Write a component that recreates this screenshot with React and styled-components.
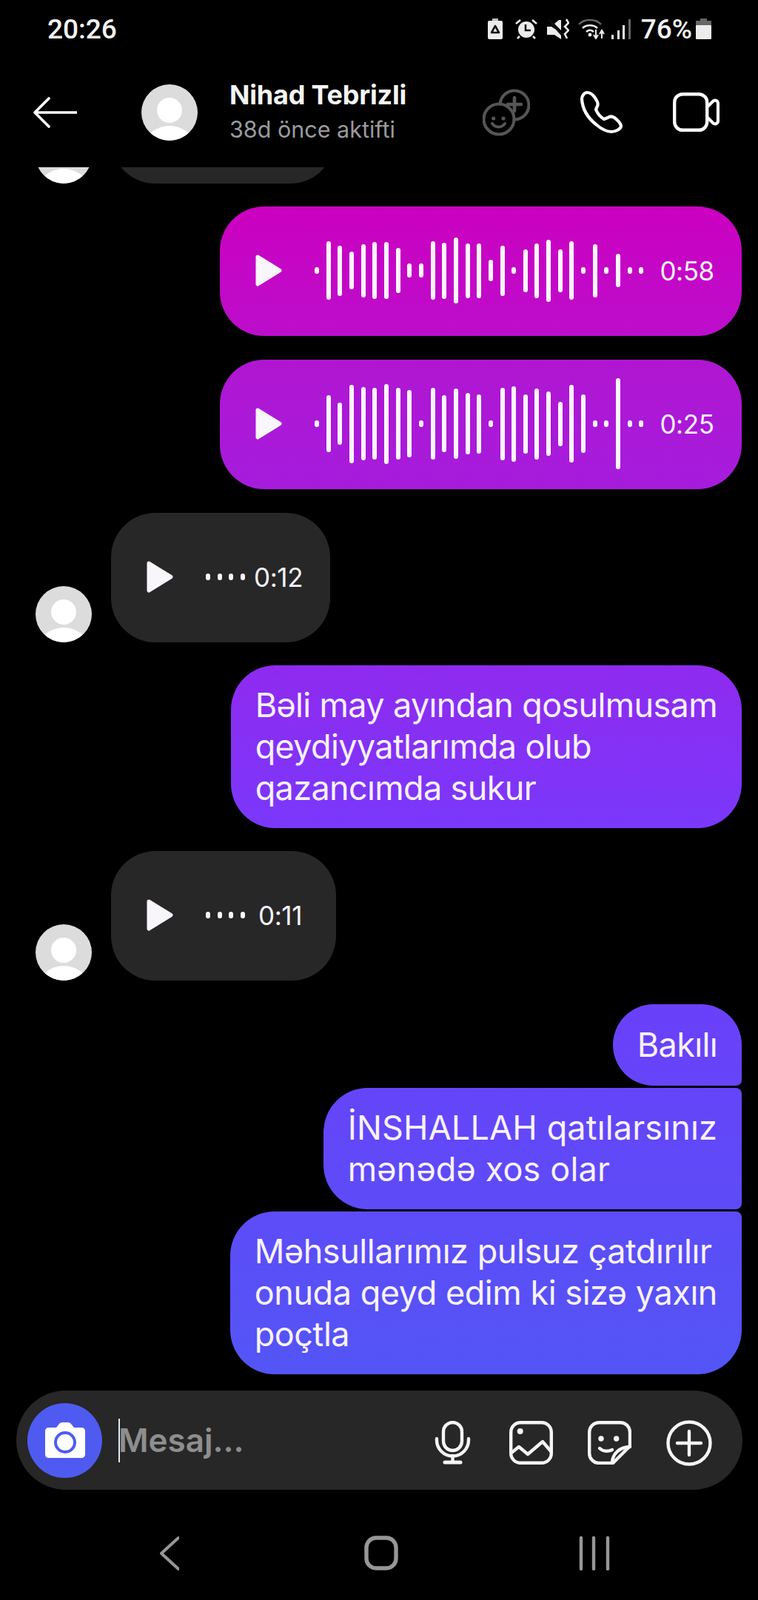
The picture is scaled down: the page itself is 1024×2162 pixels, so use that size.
import React from 'react';
import styled, { createGlobalStyle } from 'styled-components';

const GlobalStyle = createGlobalStyle`
  html, body {
    margin: 0;
    padding: 0;
    background: #000;
  }
  body {
    font-family: Inter, "Noto Sans", sans-serif;
    color: #fff;
  }
`;

const Screen = styled.div`
  width: 1024px;
  height: 2162px;
  display: flex;
  flex-direction: column;
  overflow: hidden;
  background: #000;
`;

const StatusBar = styled.div`
  height: 80px;
  flex-shrink: 0;
  box-sizing: border-box;
  padding: 0 63px 2px 64px;
  display: flex;
  align-items: center;
  justify-content: space-between;
  font-family: Roboto, sans-serif;
  font-weight: 500;
  font-size: 37px;
  color: #f2f2f2;
`;

const StatusGroup = styled.div`
  display: flex;
  align-items: center;
`;

const Glyph = styled.svg`
  display: block;
  flex-shrink: 0;
  margin-left: ${({ $ml }) => $ml || 0}px;
`;

const Percent = styled.span`
  margin-left: 14px;
`;

const Header = styled.div`
  height: 146px;
  flex-shrink: 0;
  box-sizing: border-box;
  padding: 0 52px 3px 45px;
  display: flex;
  align-items: center;
`;

const Avatar = styled.div`
  width: 76px;
  height: 76px;
  border-radius: 50%;
  overflow: hidden;
  flex-shrink: 0;
  margin-left: ${({ $ml }) => $ml || 0}px;
`;

const Who = styled.div`
  margin-left: 43px;
  padding-bottom: 3px;
  display: flex;
  flex-direction: column;
  gap: 10px;
`;

const Name = styled.div`
  font-weight: 700;
  font-size: 36px;
  line-height: 40px;
  letter-spacing: -0.2px;
  color: #f5f5f5;
`;

const LastSeen = styled.div`
  font-size: 30.5px;
  line-height: 34px;
  color: #9a9a9f;
`;

const Actions = styled.div`
  margin-left: auto;
  display: flex;
  align-items: center;
  gap: 67px;
`;

const Thread = styled.div`
  flex: 0 0 1653px;
  overflow: hidden;
  box-sizing: border-box;
  padding: 0 22px 22px 48px;
  display: flex;
  flex-direction: column;
  justify-content: flex-end;
`;

const IncomingRow = styled.div`
  flex-shrink: 0;
  display: flex;
  align-items: flex-end;
  gap: 26px;
  margin-top: ${({ $mt }) => $mt ?? 32}px;
`;

const OutgoingRow = styled.div`
  flex-shrink: 0;
  display: flex;
  justify-content: flex-end;
  margin-top: ${({ $mt }) => $mt ?? 32}px;
`;

const outgoingFill = `
  background-image: linear-gradient(180deg,
    #cc00c0 280px, #bc0ecc 455px, #b016d2 490px, #a61cdc 655px, #8f2aef 900px,
    #7a38fb 1115px, #6a40fa 1360px, #5355f6 1855px);
  background-attachment: fixed;
`;

const AudioBubble = styled.div`
  box-sizing: border-box;
  height: 175px;
  width: ${({ $width }) => $width}px;
  border-radius: 60px;
  padding: 0 0 2px 48px;
  display: flex;
  align-items: center;
  ${({ $out }) => ($out ? outgoingFill : 'background: #272727;')}
`;

const Wave = styled.div`
  margin-left: ${({ $ml }) => $ml}px;
  display: flex;
  align-items: center;
  gap: ${({ $gap }) => $gap}px;
`;

const Bar = styled.div`
  width: 6px;
  height: ${({ $h }) => $h}px;
  border-radius: 3px;
  background: #fdf6ff;
`;

const Duration = styled.span`
  margin-left: ${({ $ml }) => $ml}px;
  font-size: 35px;
  line-height: 40px;
  letter-spacing: -0.4px;
  color: #f6f0fa;
`;

const TextBubble = styled.div`
  box-sizing: border-box;
  padding: ${({ $pad }) => $pad ?? 26}px 33px;
  font-size: 45px;
  line-height: 56px;
  letter-spacing: ${({ $track }) => $track ?? -0.65}px;
  white-space: nowrap;
  color: #f8f2fd;
  ${outgoingFill}
  border-radius: ${({ $top, $bottom }) => `60px ${$top ?? 60}px ${$bottom ?? 60}px 60px`};
`;

const Composer = styled.div`
  height: 134px;
  flex-shrink: 0;
  box-sizing: border-box;
  margin: 0 21px 0 22px;
  padding: 0 41px 0 15px;
  border-radius: 67px;
  background: #272727;
  display: flex;
  align-items: center;
`;

const CameraButton = styled.div`
  width: 101px;
  height: 101px;
  flex-shrink: 0;
  border-radius: 50%;
  background: #4f5bf0;
  display: flex;
  align-items: center;
  justify-content: center;
`;

const Caret = styled.div`
  width: 2px;
  height: 59px;
  margin-left: 22px;
  flex-shrink: 0;
  background: #e8e8e8;
`;

const Placeholder = styled.span`
  margin-left: -2px;
  font-size: 44px;
  font-weight: 600;
  color: #8e8e8e;
`;

const ComposerTools = styled.div`
  margin-left: auto;
  padding-top: 7px;
  display: flex;
  align-items: center;
  gap: 47px;
`;

const NavBar = styled.div`
  flex: 0 0 149px;
  box-sizing: border-box;
  padding: 62px 0 0 216px;
  display: flex;
  align-items: flex-start;
`;

const person = (
  <svg width="76" height="76" viewBox="0 0 76 76" style={{ display: 'block' }}>
    <rect width="76" height="76" fill="#dcdcdc" />
    <circle cx="38" cy="35" r="17" fill="#fff" />
    <ellipse cx="38" cy="81" rx="32" ry="25" fill="#fff" />
  </svg>
);

const PlayIcon = () => (
  <Glyph width="36" height="43" viewBox="0 0 36 43">
    <path d="M3 3 L33 21.5 L3 40 Z" fill="#f8f6fa" stroke="#f8f6fa" strokeWidth="5" strokeLinejoin="round" />
  </Glyph>
);

const WAVE_A = [9, 79, 68, 51, 72, 77, 77, 61, 19, 19, 79, 76, 89, 74, 74, 29, 68, 9, 58, 74, 84, 58, 79, 9, 72, 9, 45, 9, 9];
const WAVE_B = [9, 77, 57, 106, 99, 97, 108, 97, 91, 9, 97, 77, 95, 83, 80, 9, 98, 102, 80, 96, 87, 60, 105, 79, 9, 9, 123, 9, 9];
const DOTS = [9, 9, 9, 9];

const VoiceOut = ({ bars, time, mt }) => (
  <OutgoingRow $mt={mt}>
    <AudioBubble $out $width={705}>
      <PlayIcon />
      <Wave $ml={44} $gap={9.66}>
        {bars.map((h, i) => <Bar key={i} $h={h} />)}
      </Wave>
      <Duration $ml={22}>{time}</Duration>
    </AudioBubble>
  </OutgoingRow>
);

const VoiceIn = ({ width, time, timeGap, mt }) => (
  <IncomingRow $mt={mt}>
    <Avatar>{person}</Avatar>
    <AudioBubble $width={width}>
      <PlayIcon />
      <Wave $ml={44} $gap={9.66}>
        {DOTS.map((h, i) => <Bar key={i} $h={h} />)}
      </Wave>
      <Duration $ml={timeGap}>{time}</Duration>
    </AudioBubble>
  </IncomingRow>
);

const StatusIcons = () => (
  <>
    <Glyph width="20" height="28" viewBox="0 0 20 28">
      <rect x="6" y="0" width="8" height="4" fill="#bdbdbd" />
      <rect x="0" y="3" width="20" height="25" rx="2" fill="#ececec" />
      <path d="M10 10 L5 19 H15 Z" fill="none" stroke="#111" strokeWidth="2.6" strokeLinejoin="round" />
    </Glyph>
    <Glyph $ml={17} width="30" height="28" viewBox="0 0 30 28">
      <circle cx="15" cy="15" r="11" fill="#ececec" />
      <path d="M14 8 V16 H21" fill="none" stroke="#111" strokeWidth="2.6" />
      <path d="M1 7 L7 2 M29 7 L23 2 M6 24 L3 27 M24 24 L27 27" stroke="#ececec" strokeWidth="2.6" />
    </Glyph>
    <Glyph $ml={13} width="30" height="28" viewBox="0 0 30 28">
      <path d="M0 11 H6 L12 15 L19 23 V28 L10 22 H0 Z M10 7 L16 2 H19 V16 Z" fill="#ececec" />
      <path d="M2 1 L20 22" stroke="#111" strokeWidth="2" />
      <path d="M26 1 L29 6 L24 11 L29 16 L24 21 L27 27" fill="none" stroke="#ececec" strokeWidth="2.6" />
    </Glyph>
    <Glyph $ml={12} width="38" height="28" viewBox="0 0 38 28">
      <path d="M1 8 C8 0 24 0 31 8" fill="none" stroke="#666" strokeWidth="2.6" />
      <path d="M6 13 C11 8 21 8 26 13" fill="none" stroke="#ececec" strokeWidth="2.6" />
      <path d="M11 18 C14 15 18 15 21 18" fill="none" stroke="#ececec" strokeWidth="2.6" />
      <circle cx="16" cy="22" r="2.4" fill="#ececec" />
      <path d="M24 15 V26 M21 22 L24 27 L27 22 M32 27 V18 M29 21 L32 16 L35 21" fill="none" stroke="#ececec" strokeWidth="2" />
    </Glyph>
    <Glyph $ml={7} width="26" height="28" viewBox="0 0 26 28">
      <rect x="0" y="22" width="3" height="6" fill="#ececec" />
      <rect x="8" y="16" width="3" height="12" fill="#ececec" />
      <rect x="15" y="9" width="3" height="19" fill="#ececec" />
      <rect x="23" y="1" width="3" height="27" fill="#666" />
    </Glyph>
    <Percent>76%</Percent>
    <Glyph $ml={5} width="21" height="28" viewBox="0 0 21 28">
      <rect x="6" y="0" width="9" height="4" fill="#666" />
      <rect x="0" y="3" width="21" height="6" fill="#666" />
      <rect x="0" y="9" width="21" height="19" rx="1" fill="#ececec" />
    </Glyph>
  </>
);

export default function App() {
  return (
    <Screen>
      <GlobalStyle />
      <StatusBar>
        <span>20:26</span>
        <StatusGroup><StatusIcons /></StatusGroup>
      </StatusBar>

      <Header>
        <Glyph width="59" height="42" viewBox="0 0 59 42">
          <path d="M59 21 H3 M21 2 L2 21 L21 40" fill="none" stroke="#fff" strokeWidth="3.6" strokeLinecap="round" strokeLinejoin="round" />
        </Glyph>
        <Avatar $ml={87}>{person}</Avatar>
        <Who>
          <Name>Nihad Tebrizli</Name>
          <LastSeen>38d önce aktifti</LastSeen>
        </Who>
        <Actions>
          <Glyph width="64" height="64" viewBox="0 0 64 64">
            <g fill="none" stroke="#565656" strokeWidth="4" strokeLinecap="round">
              <circle cx="22" cy="41" r="20.5" />
              <path d="M23.5 20.5 A19.5 19.5 0 1 1 42.5 41.5" />
              <path d="M43 12 V30 M34 21 H52" strokeWidth="4.6" />
              <path d="M13 47 C17 53 26 53 30 47" />
            </g>
            <circle cx="14.7" cy="40" r="2.6" fill="#565656" />
            <circle cx="28" cy="40" r="2.6" fill="#565656" />
          </Glyph>
          <Glyph width="59" height="59" viewBox="0 0 59 59">
            <path d="M10 3 C6 3 3 8 3 12 C4 26 12 38 22 46 C29 52 37 56 43 56 C49 56 56 52 56 48 C55 44 51 40 47 37 C44 35 41 35 38 37 L33 39 C28 36 24 31 22 26 L24.5 20 C25 17 23 13 20 9 C17 5 13 3 10 3 Z" fill="none" stroke="#fff" strokeWidth="4.2" strokeLinejoin="round" />
          </Glyph>
          <Glyph width="63" height="53" viewBox="0 0 63 53">
            <rect x="2.2" y="2.2" width="44" height="48.6" rx="11" fill="none" stroke="#fff" strokeWidth="4.4" />
            <path d="M47 19 L54 12 C57 9 61 11 61 15 V38 C61 42 57 44 54 41 L47 34" fill="none" stroke="#fff" strokeWidth="4.2" strokeLinejoin="round" />
          </Glyph>
        </Actions>
      </Header>

      <Thread>
        <IncomingRow $mt={0}>
          <Avatar>{person}</Avatar>
          <AudioBubble $width={302} />
        </IncomingRow>
        <VoiceOut bars={WAVE_A} time="0:58" mt={31} />
        <VoiceOut bars={WAVE_B} time="0:25" />
        <VoiceIn width={296} time="0:12" timeGap={12} />
        <OutgoingRow $mt={31}>
          <TextBubble>
            Bəli may ayından qosulmusam<br />
            qeydiyyatlarımda olub<br />
            qazancımda sukur
          </TextBubble>
        </OutgoingRow>
        <VoiceIn width={304} time="0:11" timeGap={18} mt={31} />
        <OutgoingRow>
          <TextBubble $bottom={8} $pad={27}>Bakılı</TextBubble>
        </OutgoingRow>
        <OutgoingRow $mt={3}>
          <TextBubble $top={8} $bottom={8} $track={0.15}>
            İNSHALLAH qatılarsınız<br />
            mənədə xos olar
          </TextBubble>
        </OutgoingRow>
        <OutgoingRow $mt={3}>
          <TextBubble $top={8} $track={-0.45}>
            Məhsullarımız pulsuz çatdırılır<br />
            onuda qeyd edim ki sizə yaxın<br />
            poçtla
          </TextBubble>
        </OutgoingRow>
      </Thread>

      <Composer>
        <CameraButton>
          <Glyph width="54" height="48" viewBox="0 0 54 48">
            <path d="M5 7 H15 L19 2 C20 1 21 0 23 0 H31 C33 0 34 1 35 2 L39 7 H49 C52 7 54 9 54 12 V43 C54 46 52 48 49 48 H5 C2 48 0 46 0 43 V12 C0 9 2 7 5 7 Z" fill="#fff" />
            <circle cx="27" cy="27" r="13" fill="none" stroke="#4f5bf0" strokeWidth="4" />
          </Glyph>
        </CameraButton>
        <Caret />
        <Placeholder>Mesaj...</Placeholder>
        <ComposerTools>
          <Glyph width="59" height="59" viewBox="0 0 59 59">
            <g fill="none" stroke="#f5f5f5" strokeWidth="4.4" strokeLinecap="round">
              <rect x="17" y="2" width="25" height="38" rx="12.5" />
              <path d="M8 24 V26 A21.5 21.5 0 0 0 51 26 V24" />
              <path d="M29.5 47 V54" />
              <path d="M19 56 H40" strokeWidth="5" />
            </g>
          </Glyph>
          <Glyph width="59" height="59" viewBox="0 0 59 59">
            <g fill="none" stroke="#f5f5f5" strokeWidth="4.4" strokeLinejoin="round">
              <rect x="2.2" y="2.2" width="54.6" height="54.6" rx="13" />
              <path d="M3 43 L13 35 L25 45 L45 28 L57 42" />
            </g>
            <circle cx="14.7" cy="14" r="4" fill="#f5f5f5" />
          </Glyph>
          <Glyph width="59" height="59" viewBox="0 0 59 59">
            <g fill="none" stroke="#f5f5f5" strokeWidth="4.4" strokeLinecap="round" strokeLinejoin="round">
              <path d="M15 2.2 H44 A13 13 0 0 1 57 15 V34 L34 57 H15 A13 13 0 0 1 2.2 44 V15 A13 13 0 0 1 15 2.2 Z" />
              <path d="M57 35 C44 35 33 44 33 57" />
              <path d="M16 37 C20 41 27 42 33 39" />
            </g>
            <circle cx="18" cy="24" r="3.7" fill="#f5f5f5" />
            <circle cx="38.7" cy="24" r="3.7" fill="#f5f5f5" />
          </Glyph>
          <Glyph width="62" height="62" viewBox="0 0 62 62">
            <g fill="none" stroke="#f5f5f5" strokeWidth="4.4" strokeLinecap="round">
              <circle cx="31" cy="31" r="28.5" />
              <path d="M31 15 V47 M15 31 H47" />
            </g>
          </Glyph>
        </ComposerTools>
      </Composer>

      <NavBar>
        <Glyph width="26" height="47" viewBox="0 0 26 47">
          <path d="M25 3 L2 24 L25 45" fill="none" stroke="#979797" strokeWidth="4" strokeLinecap="round" strokeLinejoin="round" />
        </Glyph>
        <Glyph $ml={250} width="46" height="47" viewBox="0 0 46 47">
          <rect x="3" y="3" width="40" height="41" rx="13" fill="none" stroke="#979797" strokeWidth="5.4" />
        </Glyph>
        <Glyph $ml={244} width="42" height="47" viewBox="0 0 42 47">
          <path d="M3 3 V45 M20 3 V45 M39 3 V45" fill="none" stroke="#979797" strokeWidth="4.4" strokeLinecap="round" />
        </Glyph>
      </NavBar>
    </Screen>
  );
}
